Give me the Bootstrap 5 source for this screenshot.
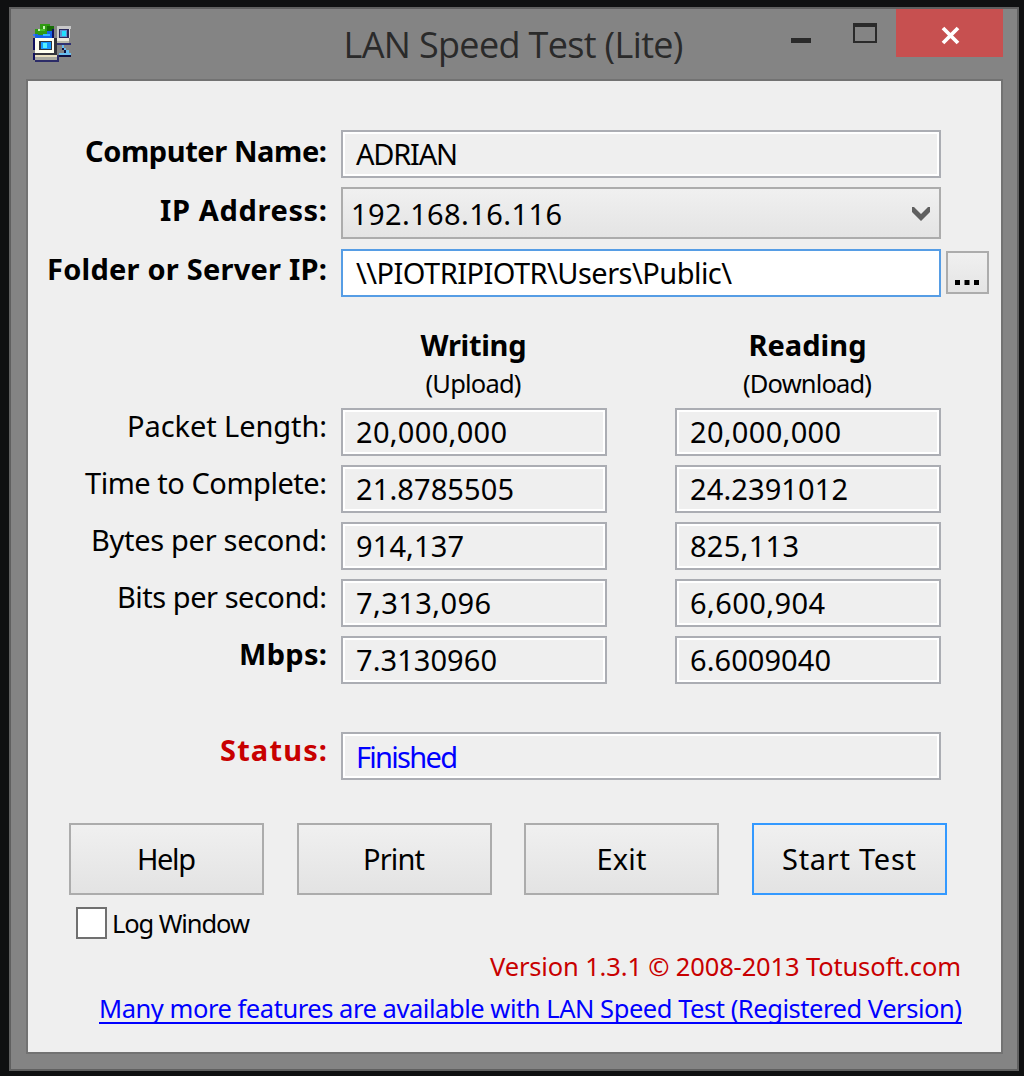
<!DOCTYPE html>
<html lang="en">
<head>
<meta charset="utf-8">
<title>LAN Speed Test (Lite)</title>
<link rel="stylesheet" href="https://cdn.jsdelivr.net/npm/bootstrap@5.3.0/dist/css/bootstrap.min.css">
<style>
body{width:1024px;height:1076px;overflow:hidden;background:#0f1011;font-family:"Noto Sans",sans-serif;color:#000;font-size:29px}
.desk{padding:7px 5px 5px 9px;height:1076px}
.win{height:1064px;background:#848484;border:2px solid #606060;padding:0 14px 15px 15px}
.titlebar{height:70px;display:grid;grid-template-columns:1fr auto 1fr}
.appicon{margin:15px 0 0 7px;width:38px;height:38px}
.wtitle{font-family:"Open Sans",sans-serif;font-size:36px;line-height:71px;color:#2a2a2a;margin-left:-2px}
.ctl{height:48px}
.closebtn{width:107px;height:48px;background:#c75050;padding-left:1px}
.client{height:975px;background:#efefef;border:2px solid #727272;padding:49px 0 0;line-height:1}
.lbl{width:299px;margin-right:14px;text-align:right;white-space:nowrap;flex:none}
.field{border:2px solid #abadb3;box-shadow:inset 0 0 0 2px #fff;height:48px;line-height:44px;padding-left:13px;white-space:nowrap}
.wide{width:600px}.half{width:266px}
.combo{height:52px;line-height:50px;border:2px solid #acacac;background:linear-gradient(#f0f0f0,#e4e4e4);box-shadow:none;padding:0 9px 0 8px}
.combo span{position:relative;top:1px}
.active-f{border-color:#569de5;background:#fff;height:48px}
.browse{width:43px;height:43px;margin:2px 0 0 5px;border:2px solid #acacac;background:linear-gradient(#f0f0f0,#e4e4e4)}
.r1{height:57px}.r1 .lbl{line-height:41px}
.r2{height:62px}.r2 .lbl{line-height:45px}
.r3{height:81px}.r3 .lbl{line-height:40px}
.heads{padding-left:313px;height:78px;gap:68px}
.heads>div{width:266px;text-align:center;white-space:nowrap}
.h-a{line-height:29px}.h-b{line-height:48px;font-size:25.5px}
.heads span{margin-left:-1px}
.datarow{height:57px}.datarow .lbl{line-height:35px}.datarow .field+.field{margin-left:68px}
.statusrow{margin-top:39px;height:91px;color:#00f}.statusrow .lbl{color:#c80000;line-height:36px}
.statusrow .field{line-height:46px}
.btns{margin-left:41px;gap:32.5px;height:72px}
.wbtn{width:195px;height:72px;border:2px solid #acacac;background:linear-gradient(#f0f0f0,#e3e3e3);line-height:68px;text-align:center}
.wbtn.dflt{border-color:#3399ff}
.logrow{margin:12px 0 0 48px;height:32px;font-size:25.5px;line-height:33px}
.cbox{width:31px;height:32px;border:2px solid #707070;background:#fff;margin-right:5px}
.ver{margin-top:12px;padding-right:40px;text-align:right;color:#c80000;font-size:25.5px;line-height:31px}
.reg{margin-top:10px;padding-right:39px;font-size:25.5px;line-height:32px}
.reg a{color:#00f;text-decoration:none;border-bottom:2px solid #00f;display:inline-block;height:32px;line-height:32px}
[data-w]{display:inline-block;white-space:nowrap}
</style>
<script src="https://cdn.jsdelivr.net/npm/bootstrap@5.3.0/dist/js/bootstrap.bundle.min.js"></script>
</head>
<body>
<div class="desk"><div class="win">
 <div class="titlebar">
  <svg class="appicon" viewBox="0 0 16 16" shape-rendering="crispEdges">
   <path fill="#1464e8" d="M1 3h7v3h-7z"/><path fill="#35b8ff" d="M4 4h3v1h-3z"/>
   <path fill="#2f9a12" d="M3 0h4v1h2v1h-1v1h-2v1h-2v.6h-2v-.6h-1v-2h2z"/><path fill="#176c08" d="M6 1h3v1h-1v1h-2z"/><path fill="#c8f5b8" d="M2 2h1v1h-1zM4 1h1v1h-1z"/><path fill="#49c22c" d="M3 2h2v1h-2z"/>
   <path fill="#101060" d="M8 2h1v4h-1zM0 6h1v5h-1zM0 12h1v3h-1z"/><path fill="#3a78f0" d="M0 4h1v1h-1z"/>
   <path fill="#c8c8c8" d="M10 1h6v1h-5v4h-1z"/><path fill="#28285c" d="M11 2h4v4h-4z"/><path fill="#6090d0" d="M11.500 2.500h3v3h-3z"/><path fill="#20e0ff" d="M12 3h2v2h-2z"/><path fill="#d8d8d8" d="M15 2h.5v4h-.5z"/><path fill="#ece8dc" d="M10 6h5v1h-5z"/><path fill="#b8b8a8" d="M10 7h5v1h-5z"/><path fill="#303070" d="M10 8h6v1h-6z"/>
   <path fill="#fffff0" d="M1 6h8v6h-8z"/><path fill="#34343c" d="M2.500 7h5.500v4h-5.500zM9 6h1v7h-9v-1h8z"/><path fill="#1598ff" d="M3.500 7.500h4v3h-4z"/><path fill="#55f0ff" d="M4 8h2v2h-2z"/>
   <path fill="#e8dfc0" d="M1 13h9v1h-9z"/><path fill="#a8a8a0" d="M1 14h9v1h-9z"/><path fill="#2c2c68" d="M1 15h9v-2h1v3h-10z"/>
   <path fill="#67bdf0" d="M12 9h1v1h1v1h1v1h1v1h-5v-1h2v-2h-1z"/><path fill="#101040" d="M12 10h1v1h1v1h-1v-1h-1zM11 13h5v1h-5z"/>
  </svg>
  <div class="wtitle"><span data-w="340">LAN Speed Test (Lite)</span></div>
  <div class="ctl d-flex justify-content-end">
   <svg width="105" height="48"><path fill="#2a2a2a" d="M0 29h20v5H0zM62 14h24v20H62zM64 18v14h20V18z" fill-rule="evenodd"/></svg>
   <div class="closebtn"><svg width="106" height="48"><path d="M46 18L61 33M61 18L46 33" stroke="#fff" stroke-width="3.8"/></svg></div>
  </div>
 </div>
 <div class="client">
  <div class="d-flex align-items-start r1"><div class="lbl fw-bold"><span data-w="242">Computer Name:</span></div><div class="field wide"><span data-w="102">ADRIAN</span></div></div>
  <div class="d-flex align-items-start r2"><div class="lbl fw-bold"><span data-w="167">IP Address:</span></div><div class="field wide combo d-flex justify-content-between align-items-center"><span data-w="211">192.168.16.116</span><svg width="18" height="16"><path fill="#606060" d="M0 2h2l7 7 7-7h2v5l-9 9-9-9z"/></svg></div></div>
  <div class="d-flex align-items-start r3"><div class="lbl fw-bold"><span data-w="280">Folder or Server IP:</span></div><div class="field wide active-f"><span data-w="376">\\PIOTRIPIOTR\Users\Public\</span></div><div class="browse"><svg width="39" height="39"><path d="M7 27h5v5H7zM16.500 27h5v5h-5zM26 27h5v5h-5z"/></svg></div></div>
  <div class="heads d-flex"><div><div class="h-a fw-bold"><span data-w="106">Writing</span></div><div class="h-b"><span data-w="96">(Upload)</span></div></div><div><div class="h-a fw-bold"><span data-w="118">Reading</span></div><div class="h-b"><span data-w="129">(Download)</span></div></div></div>
  <div class="datarow d-flex align-items-start"><div class="lbl"><span data-w="200">Packet Length:</span></div><div class="field half"><span data-w="151">20,000,000</span></div><div class="field half"><span data-w="151">20,000,000</span></div></div>
  <div class="datarow d-flex align-items-start"><div class="lbl"><span data-w="242">Time to Complete:</span></div><div class="field half"><span data-w="158">21.8785505</span></div><div class="field half"><span data-w="158">24.2391012</span></div></div>
  <div class="datarow d-flex align-items-start"><div class="lbl"><span data-w="236">Bytes per second:</span></div><div class="field half"><span data-w="108">914,137</span></div><div class="field half"><span data-w="109">825,113</span></div></div>
  <div class="datarow d-flex align-items-start"><div class="lbl"><span data-w="210">Bits per second:</span></div><div class="field half"><span data-w="135">7,313,096</span></div><div class="field half"><span data-w="135">6,600,904</span></div></div>
  <div class="datarow d-flex align-items-start"><div class="lbl fw-bold"><span data-w="88">Mbps:</span></div><div class="field half"><span data-w="141">7.3130960</span></div><div class="field half"><span data-w="141">6.6009040</span></div></div>
  <div class="statusrow d-flex align-items-start"><div class="lbl fw-bold"><span data-w="107">Status:</span></div><div class="field wide"><span data-w="102">Finished</span></div></div>
  <div class="btns d-flex"><div class="wbtn"><span data-w="59">Help</span></div><div class="wbtn"><span data-w="62">Print</span></div><div class="wbtn"><span data-w="50">Exit</span></div><div class="wbtn dflt"><span data-w="134">Start Test</span></div></div>
  <div class="logrow d-flex"><div class="cbox"></div><span data-w="138">Log Window</span></div>
  <div class="ver"><span data-w="471">Version 1.3.1 © 2008-2013 Totusoft.com</span></div>
  <div class="reg text-end"><a href="#" data-w="863">Many more features are available with LAN Speed Test (Registered Version)</a></div>
 </div>
</div></div>
<script>
/* Tracks each label out or in so that it fills its design width. */
document.querySelectorAll('[data-w]').forEach(function(e){
  var s=(e.dataset.w-e.getBoundingClientRect().width)/(e.textContent.length-1);
  e.style.letterSpacing=s.toFixed(3)+'px';
  e.style.marginRight=(-s).toFixed(3)+'px';
});
</script>
</body>
</html>
